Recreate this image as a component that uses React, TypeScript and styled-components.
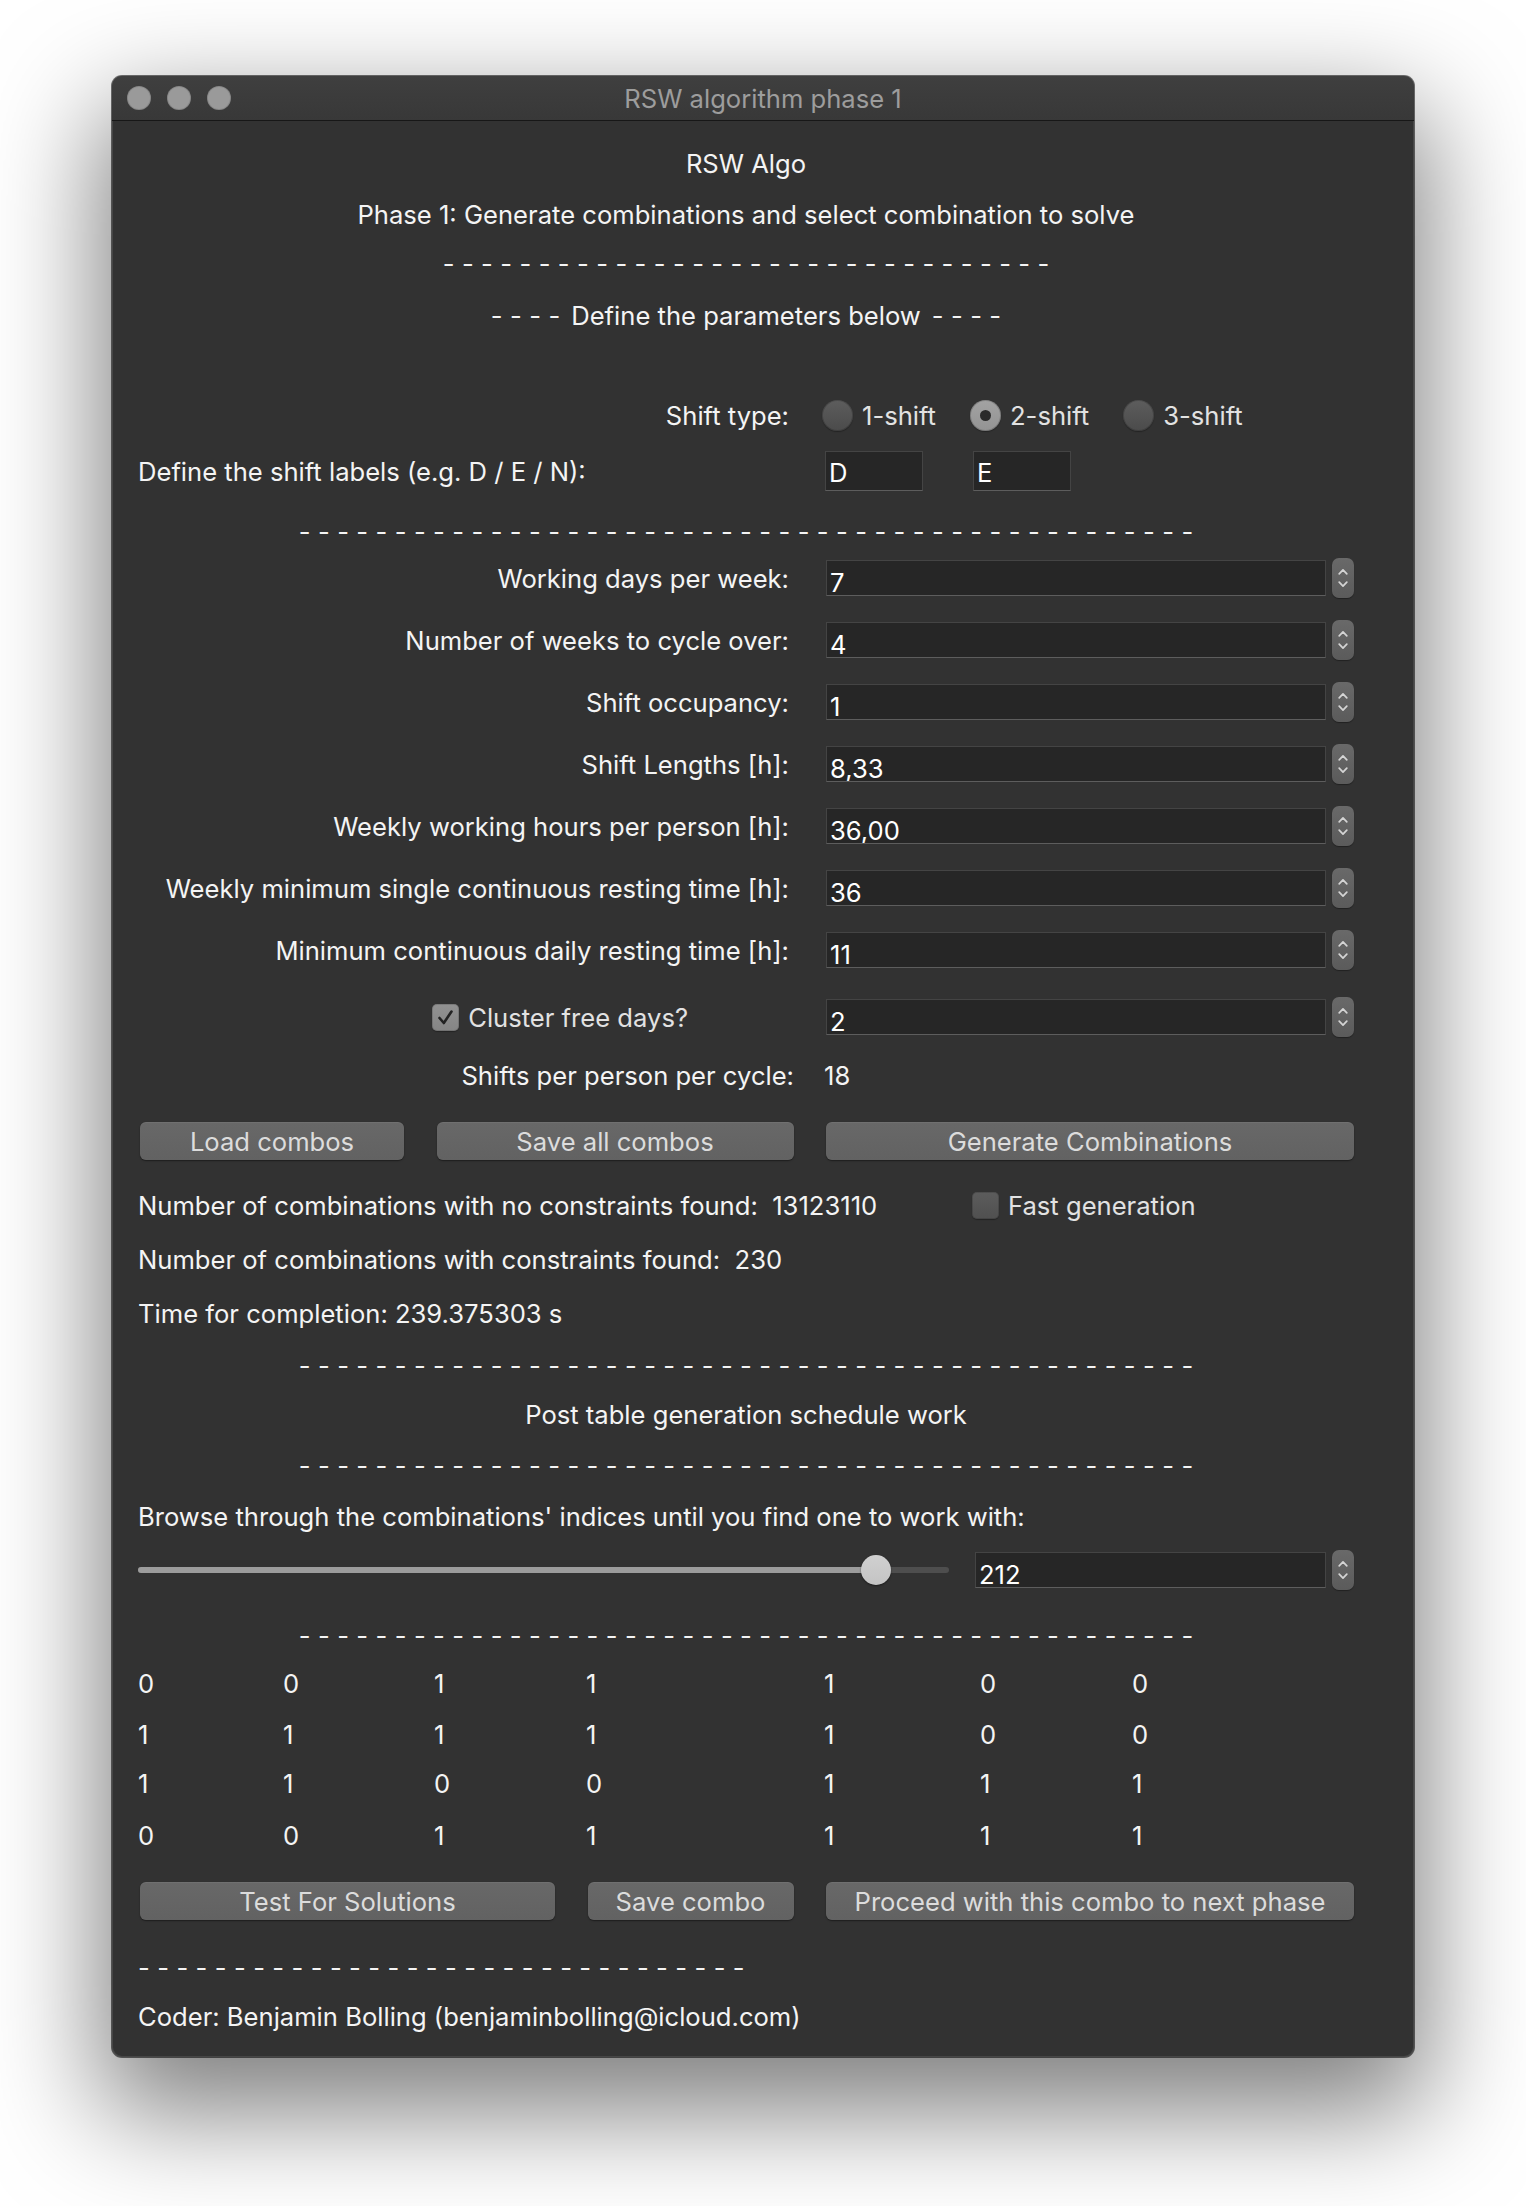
import React from "react";
import styled, { createGlobalStyle } from "styled-components";

const FONT = `Inter, "Noto Sans", "Liberation Sans", sans-serif`;

const GlobalStyle = createGlobalStyle`
  html, body { margin: 0; padding: 0; background: #ffffff; }
  body { width: 1526px; height: 2206px; overflow: hidden; font-family: ${FONT}; }
  * { box-sizing: border-box; }
`;

const Page = styled.div`
  width: 1526px;
  height: 2206px;
  padding: 76px 0 0 112px;
`;

const Window = styled.div`
  width: 1302px;
  height: 1981px;
  background: #323232;
  border-radius: 10px;
  overflow: hidden;
  display: flex;
  flex-direction: column;
  box-shadow: 0 0 0 1px rgba(0, 0, 0, 0.55), inset 0 0 0 1px rgba(255, 255, 255, 0.1),
    0 44px 110px 12px rgba(0, 0, 0, 0.5);
`;

const TitleBar = styled.div`
  flex: none;
  height: 45px;
  display: grid;
  grid-template-columns: 1fr auto 1fr;
  align-items: center;
  background: linear-gradient(#3f3f3f, #383838);
  border-bottom: 1px solid #171717;
  padding: 0 15px;
`;

const Lights = styled.div`
  display: flex;
  gap: 16px;
`;

const Light = styled.span`
  width: 24px;
  height: 24px;
  border-radius: 50%;
  background: #9a9a9a;
  box-shadow: inset 0 0 0 1px rgba(0, 0, 0, 0.12);
`;

const WindowTitle = styled.div`
  font-size: 25.6px;
  color: #9d9d9d;
  white-space: nowrap;
`;

const Content = styled.div`
  flex: 1;
  display: flex;
  flex-direction: column;
  padding: 22px 60px 0 26px;
  color: #f4f4f4;
  font-size: 25.6px;
`;

const CenterRow = styled.div<{ $mt: number }>`
  height: 40px;
  margin-top: ${(p) => p.$mt}px;
  display: flex;
  align-items: center;
  justify-content: center;
  white-space: nowrap;
`;

const LeftRow = styled.div<{ $mt: number }>`
  height: 40px;
  margin-top: ${(p) => p.$mt}px;
  display: flex;
  align-items: center;
  white-space: nowrap;
`;

const DashLine = styled.div`
  display: flex;
  align-items: center;
`;

const DashChar = styled.span`
  width: 19.2px;
  text-align: left;
  &:last-child {
    width: auto;
  }
`;

const DashGroup = styled.span`
  display: flex;
`;

const Heading = styled.span<{ $pad: number }>`
  padding: 0 ${(p) => p.$pad}px;
`;

const FormRow = styled.div<{ $mt: number; $label?: number; $gap?: number }>`
  height: 40px;
  margin-top: ${(p) => p.$mt}px;
  display: grid;
  grid-template-columns: ${(p) => p.$label ?? 651}px minmax(0, 1fr);
  column-gap: ${(p) => p.$gap ?? 37}px;
  align-items: center;
  white-space: nowrap;
`;

const Label = styled.div`
  text-align: right;
`;

const Field = styled.div`
  display: flex;
  align-items: center;
  gap: 6px;
  min-width: 0;
`;

const TextInput = styled.input`
  flex: 1;
  width: 0;
  min-width: 0;
  height: 36px;
  background: #262626;
  border: 1px solid #444444;
  border-bottom-color: #5d5d5d;
  color: #ffffff;
  font-family: ${FONT};
  font-size: 25.6px;
  padding: 8px 0 0 3px;
  outline: none;
`;

const ShortInput = styled(TextInput)`
  flex: none;
  width: 98px;
  height: 40px;
  padding: 3px 0 0 3px;
`;

const Spin = styled.div`
  flex: none;
  width: 22px;
  height: 40px;
  border-radius: 7px;
  background: linear-gradient(#696969, #5b5b5b);
  box-shadow: 0 1px 1px rgba(0, 0, 0, 0.35);
  display: flex;
  flex-direction: column;
  align-items: center;
  justify-content: center;
  gap: 6px;
`;

const ChoiceRow = styled.div<{ $mt: number }>`
  height: 40px;
  margin-top: ${(p) => p.$mt}px;
  display: grid;
  grid-template-columns: 651px minmax(0, 1fr);
  column-gap: 33px;
  align-items: center;
  white-space: nowrap;
`;

const RadioGroup = styled.div`
  display: flex;
  align-items: center;
  gap: 34px;
`;

const Option = styled.label`
  display: flex;
  align-items: center;
  gap: 9px;
  color: #e2e2e2;
`;

const RadioDot = styled.span<{ $on?: boolean }>`
  width: 31px;
  height: 31px;
  border-radius: 50%;
  display: flex;
  align-items: center;
  justify-content: center;
  background: ${(p) => (p.$on ? "linear-gradient(#a3a3a3, #939393)" : "linear-gradient(#5d5d5d, #4b4b4b)")};
  box-shadow: inset 0 0 0 1px rgba(0, 0, 0, 0.18), 0 1px 1px rgba(0, 0, 0, 0.3);
  &::after {
    content: "";
    width: 11px;
    height: 11px;
    border-radius: 50%;
    background: ${(p) => (p.$on ? "#2a2a2a" : "transparent")};
  }
`;

const LabelsRow = styled.div<{ $mt: number }>`
  height: 40px;
  margin-top: ${(p) => p.$mt}px;
  display: grid;
  grid-template-columns: 687px 148px 98px;
  align-items: center;
  white-space: nowrap;
`;

const CheckCell = styled.div`
  display: flex;
  justify-content: flex-end;
  padding-right: 101px;
`;

const Box = styled.span<{ $on?: boolean }>`
  width: 27px;
  height: 27px;
  border-radius: 5px;
  display: flex;
  align-items: center;
  justify-content: center;
  background: ${(p) => (p.$on ? "linear-gradient(#929292, #858585)" : "linear-gradient(#5c5c5c, #505050)")};
  box-shadow: inset 0 0 0 1px rgba(0, 0, 0, 0.15), 0 1px 1px rgba(0, 0, 0, 0.3);
`;

const CheckOption = styled.label`
  display: flex;
  align-items: center;
  gap: 9px;
  color: #e2e2e2;
`;

const ButtonRow = styled.div<{ $mt: number; $cols: string }>`
  height: 40px;
  margin-top: ${(p) => p.$mt}px;
  display: grid;
  grid-template-columns: ${(p) => p.$cols};
  column-gap: 32.5px;
  align-items: center;
  padding-left: 2px;
`;

const Button = styled.button`
  height: 38px;
  border: none;
  border-radius: 6px;
  background: linear-gradient(#686868, #626262);
  color: #dcdcdc;
  font-family: ${FONT};
  font-size: 25.6px;
  padding: 0;
  box-shadow: 0 1px 1.5px rgba(0, 0, 0, 0.45), inset 0 1px 0 rgba(255, 255, 255, 0.06);
  white-space: nowrap;
`;

const StatRow = styled.div<{ $mt: number }>`
  height: 40px;
  margin-top: ${(p) => p.$mt}px;
  display: grid;
  grid-template-columns: 834px minmax(0, 1fr);
  align-items: center;
  white-space: nowrap;
`;

const SliderRow = styled.div<{ $mt: number }>`
  height: 40px;
  margin-top: ${(p) => p.$mt}px;
  display: grid;
  grid-template-columns: 811px minmax(0, 1fr);
  column-gap: 26px;
  align-items: center;
`;

const SliderBox = styled.div`
  position: relative;
  height: 40px;
  display: flex;
  align-items: center;
`;

const Track = styled.div`
  width: 100%;
  height: 6px;
  border-radius: 3px;
  background: #4e4e4e;
  overflow: hidden;
`;

const TrackFill = styled.div`
  height: 100%;
  background: #9c9c9c;
`;

const Thumb = styled.div`
  position: absolute;
  top: 5px;
  width: 30px;
  height: 30px;
  border-radius: 50%;
  background: linear-gradient(#d0d0d0, #c4c4c4);
  box-shadow: 0 1px 2px rgba(0, 0, 0, 0.45);
`;

const TableRow = styled.div<{ $mt: number }>`
  height: 40px;
  margin-top: ${(p) => p.$mt}px;
  display: grid;
  grid-template-columns: 145px 151px 152px 238px 156px 152px 1fr;
  align-items: center;
`;

const Cell = styled.span``;

const Chevron = ({ up }: { up?: boolean }) => (
  <svg width="10" height="7" viewBox="0 0 10 7">
    <path
      d={up ? "M1.2 5.8 L5 1.8 L8.8 5.8" : "M1.2 1.2 L5 5.2 L8.8 1.2"}
      fill="none"
      stroke="#d4d4d4"
      strokeWidth="1.7"
      strokeLinecap="round"
      strokeLinejoin="round"
    />
  </svg>
);

const CheckMark = () => (
  <svg width="19" height="19" viewBox="0 0 19 19">
    <path d="M3.5 10 L7.8 15 L15.5 3.5" fill="none" stroke="#232323" strokeWidth="2.6" strokeLinecap="round" strokeLinejoin="round" />
  </svg>
);

const Dashes = ({ n }: { n: number }) => (
  <DashGroup>
    {Array.from({ length: n }, (_, i) => (
      <DashChar key={i}>-</DashChar>
    ))}
  </DashGroup>
);

const SpinField = ({ value }: { value: string }) => (
  <Field>
    <TextInput readOnly value={value} />
    <Spin>
      <Chevron up />
      <Chevron />
    </Spin>
  </Field>
);

const params: { label: string; value: string; mt: number }[] = [
  { label: "Working days per week:", value: "7", mt: 7 },
  { label: "Number of weeks to cycle over:", value: "4", mt: 22 },
  { label: "Shift occupancy:", value: "1", mt: 22 },
  { label: "Shift Lengths [h]:", value: "8,33", mt: 22 },
  { label: "Weekly working hours per person [h]:", value: "36,00", mt: 22 },
  { label: "Weekly minimum single continuous resting time [h]:", value: "36", mt: 22 },
  { label: "Minimum continuous daily resting time [h]:", value: "11", mt: 22 },
];

const table = [
  { mt: 8, cells: ["0", "0", "1", "1", "1", "0", "0"] },
  { mt: 11, cells: ["1", "1", "1", "1", "1", "0", "0"] },
  { mt: 9, cells: ["1", "1", "0", "0", "1", "1", "1"] },
  { mt: 12, cells: ["0", "0", "1", "1", "1", "1", "1"] },
];

const sliderValue = 212;
const sliderMax = 229;
const trackWidth = 811;
const thumbSize = 30;

export default function App() {
  const thumbLeft = ((trackWidth - thumbSize) * sliderValue) / sliderMax;
  return (
    <>
      <GlobalStyle />
      <Page>
        <Window>
          <TitleBar>
            <Lights>
              <Light />
              <Light />
              <Light />
            </Lights>
            <WindowTitle>RSW algorithm phase 1</WindowTitle>
            <span />
          </TitleBar>
          <Content>
            <CenterRow $mt={0}>RSW Algo</CenterRow>
            <CenterRow $mt={11}>Phase 1: Generate combinations and select combination to solve</CenterRow>
            <CenterRow $mt={9}>
              <DashLine>
                <Dashes n={32} />
              </DashLine>
            </CenterRow>
            <CenterRow $mt={12}>
              <DashLine>
                <Dashes n={4} />
                <Heading $pad={11}>Define the parameters below</Heading>
                <Dashes n={4} />
              </DashLine>
            </CenterRow>

            <ChoiceRow $mt={60}>
              <Label>Shift type:</Label>
              <RadioGroup>
                <Option>
                  <RadioDot />
                  1-shift
                </Option>
                <Option>
                  <RadioDot $on />
                  2-shift
                </Option>
                <Option>
                  <RadioDot />
                  3-shift
                </Option>
              </RadioGroup>
            </ChoiceRow>

            <LabelsRow $mt={16}>
              <span>Define the shift labels (e.g. D / E / N):</span>
              <ShortInput readOnly value="D" />
              <ShortInput readOnly value="E" />
            </LabelsRow>

            <CenterRow $mt={20}>
              <DashLine>
                <Dashes n={47} />
              </DashLine>
            </CenterRow>

            {params.map((p) => (
              <FormRow key={p.label} $mt={p.mt}>
                <Label>{p.label}</Label>
                <SpinField value={p.value} />
              </FormRow>
            ))}

            <FormRow $mt={27}>
              <CheckCell>
                <CheckOption>
                  <Box $on>
                    <CheckMark />
                  </Box>
                  Cluster free days?
                </CheckOption>
              </CheckCell>
              <SpinField value="2" />
            </FormRow>

            <FormRow $mt={18} $label={656} $gap={30}>
              <Label>Shifts per person per cycle:</Label>
              <span>18</span>
            </FormRow>

            <ButtonRow $mt={26} $cols="264px 357px 1fr">
              <Button>Load combos</Button>
              <Button>Save all combos</Button>
              <Button>Generate Combinations</Button>
            </ButtonRow>

            <StatRow $mt={24}>
              <span>Number of combinations with no constraints found:&nbsp; 13123110</span>
              <CheckOption>
                <Box />
                Fast generation
              </CheckOption>
            </StatRow>
            <LeftRow $mt={14}>Number of combinations with constraints found:&nbsp; 230</LeftRow>
            <LeftRow $mt={14}>Time for completion: 239.375303 s</LeftRow>

            <CenterRow $mt={12}>
              <DashLine>
                <Dashes n={47} />
              </DashLine>
            </CenterRow>
            <CenterRow $mt={9}>Post table generation schedule work</CenterRow>
            <CenterRow $mt={11}>
              <DashLine>
                <Dashes n={47} />
              </DashLine>
            </CenterRow>

            <LeftRow $mt={11}>Browse through the combinations' indices until you find one to work with:</LeftRow>

            <SliderRow $mt={14}>
              <SliderBox>
                <Track>
                  <TrackFill style={{ width: thumbLeft + thumbSize / 2 }} />
                </Track>
                <Thumb style={{ left: thumbLeft }} />
              </SliderBox>
              <SpinField value={String(sliderValue)} />
            </SliderRow>

            <CenterRow $mt={25}>
              <DashLine>
                <Dashes n={47} />
              </DashLine>
            </CenterRow>

            {table.map((r, i) => (
              <TableRow key={i} $mt={r.mt}>
                {r.cells.map((c, j) => (
                  <Cell key={j}>{c}</Cell>
                ))}
              </TableRow>
            ))}

            <ButtonRow $mt={26} $cols="415px 206px 1fr">
              <Button>Test For Solutions</Button>
              <Button>Save combo</Button>
              <Button>Proceed with this combo to next phase</Button>
            </ButtonRow>

            <LeftRow $mt={26}>
              <DashLine>
                <Dashes n={32} />
              </DashLine>
            </LeftRow>

            <LeftRow $mt={9}>Coder: Benjamin Bolling (benjaminbolling@icloud.com)</LeftRow>
          </Content>
        </Window>
      </Page>
    </>
  );
}
